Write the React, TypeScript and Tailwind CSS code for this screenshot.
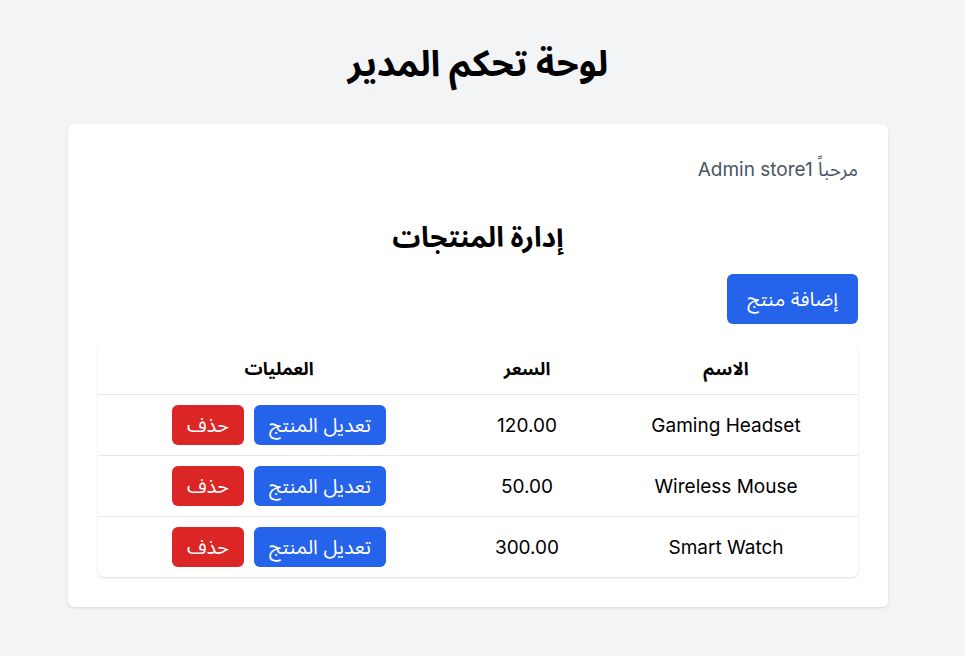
import React from "react";

const products = [
  { name: "Gaming Headset", price: "120.00" },
  { name: "Wireless Mouse", price: "50.00" },
  { name: "Smart Watch", price: "300.00" },
];

export default function App() {
  return (
    <div
      dir="rtl"
      className="min-h-screen bg-[#f3f4f6]"
      style={{ fontFamily: "Inter, 'Noto Sans Arabic', 'Noto Sans', 'DejaVu Sans', sans-serif" }}
    >
      <div className="pr-[9px] pt-[43px] pb-10">
        <h1 className="text-center text-4xl font-bold text-black leading-10 mb-[41px]">لوحة تحكم المدير</h1>
        <div className="mx-auto w-[820px] bg-white rounded-md shadow pt-8 px-[30px] pb-[30px]">
          <p className="text-[19px] leading-7 text-gray-600 mb-[35px]">مرحباً Admin store1</p>
          <h2 className="text-center text-[28px] leading-9 font-bold text-black mb-[19px]">إدارة المنتجات</h2>
          <div className="flex mb-[20px]">
            <button className="bg-[#2563eb] text-white text-xl px-5 py-[11px] rounded-md leading-7">إضافة منتج</button>
          </div>
          <div className="rounded-md shadow overflow-hidden">
            <table className="w-full border-collapse">
              <thead>
                <tr className="h-[50px] border-b border-gray-200">
                  <th className="w-[264px] text-lg font-bold text-black">الاسم</th>
                  <th className="w-[134px] text-lg font-bold text-black">السعر</th>
                  <th className="text-lg font-bold text-black">العمليات</th>
                </tr>
              </thead>
              <tbody>
                {products.map((p, i) => (
                  <tr key={p.name} className={`h-[61px] ${i < products.length - 1 ? "border-b border-gray-200" : ""}`}>
                    <td className="text-center text-[19px] text-black pt-[3px]">{p.name}</td>
                    <td className="text-center text-[19px] text-black pt-[3px]">{p.price}</td>
                    <td>
                      <div className="flex justify-center gap-[10px]">
                        <button className="bg-[#2563eb] text-white text-xl px-[15px] h-10 rounded-md">تعديل المنتج</button>
                        <button className="bg-[#dc2626] text-white text-xl px-[15px] h-10 rounded-md">حذف</button>
                      </div>
                    </td>
                  </tr>
                ))}
              </tbody>
            </table>
          </div>
        </div>
      </div>
    </div>
  );
}
